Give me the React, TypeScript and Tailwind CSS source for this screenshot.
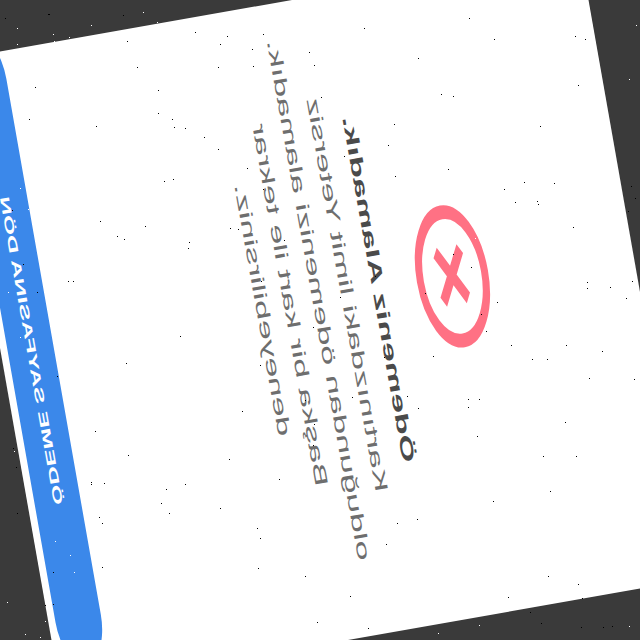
// speckles read off the picture, [x, y] in page pixels
const BLACK_DOTS: [number, number][] = [
  [49, 14], [5, 18], [123, 15],
  [195, 32], [227, 36], [263, 34], [220, 44], [252, 49], [309, 52], [314, 65], [127, 41], [137, 67], [218, 67], [253, 66],
  [35, 87], [158, 90], [29, 119], [158, 113], [172, 119], [174, 127], [185, 128], [96, 126], [204, 137], [218, 149],
  [247, 168], [164, 181], [173, 179], [263, 189], [100, 221], [145, 226], [230, 228], [238, 229], [117, 236], [124, 239],
  [189, 242], [188, 248], [284, 240], [68, 281], [73, 281], [261, 281], [12, 210], [23, 264], [37, 292],
  [364, 28], [469, 18], [494, 39], [575, 36], [585, 39], [418, 58], [578, 85], [441, 94], [453, 96], [321, 97],
  [394, 124], [540, 126], [388, 145], [344, 156], [448, 169], [395, 176], [524, 182], [554, 183], [504, 189], [515, 202],
  [538, 204], [537, 201], [635, 198], [573, 227], [453, 254], [471, 267], [587, 282], [610, 287], [632, 281], [587, 288],
  [626, 298], [497, 302], [375, 276], [340, 297], [425, 293], [481, 314], [631, 186], [628, 211],
  [180, 336], [126, 363], [260, 365], [57, 376], [242, 411], [95, 431], [128, 455], [229, 459], [279, 479],
  [91, 482], [91, 484], [104, 483], [185, 484], [166, 489], [161, 503], [169, 513], [220, 508], [99, 517], [102, 523],
  [257, 528], [260, 538], [102, 567], [258, 568], [305, 576], [317, 622], [305, 400], [314, 424], [313, 445], [313, 327],
  [53, 604], [53, 572],
  [486, 331], [511, 345], [566, 345], [602, 351], [532, 359], [547, 359], [433, 356], [384, 357], [589, 378], [634, 379],
  [407, 396], [352, 397], [468, 399], [479, 399], [468, 407], [418, 408], [565, 422], [477, 436], [543, 456], [576, 456],
  [550, 491], [493, 501], [417, 519], [397, 523], [386, 544], [548, 576], [578, 584], [582, 598], [350, 596], [508, 597],
  [368, 628],
  [48, 14], [13, 448], [16, 467], [17, 513], [45, 605],
  [530, 612], [541, 623], [581, 627], [603, 627], [612, 626],
];

const WHITE_DOTS: [number, number][] = [
  [17, 28], [53, 34], [69, 37], [54, 41], [17, 44], [91, 25], [143, 12], [157, 22],
  [20, 188], [28, 209], [8, 292],
  [475, 238], [636, 25], [629, 79],
  [20, 337], [55, 541], [70, 555], [74, 572], [14, 451], [25, 483], [7, 602], [45, 621], [25, 634], [40, 637],
  [479, 625], [438, 633], [629, 626],
];

export default function App() {
  return (
    <div className="relative flex h-[640px] w-[640px] items-center justify-center overflow-hidden bg-[#3a3a3a]">
      <div className="h-[640px] w-[320px] shrink-0 overflow-hidden bg-white [transform:matrix(-0.3473,-1.9696,-0.9848,0.1736,0,0)]">
        <div className="ml-[20px] flex h-full w-[300px] flex-col items-center font-['Liberation_Sans',sans-serif]">
          <div className="mt-[146px] flex h-[72px] w-[72px] items-center justify-center rounded-full border-[7px] border-[#ff7184]">
            <svg width="33" height="33" viewBox="0 0 33 33">
              <path d="M4 4 L29 29 M29 4 L4 29" stroke="#ff7184" strokeWidth="7" fill="none" />
            </svg>
          </div>
          <h1 className="mt-[28px] text-lg font-bold leading-[22px] text-[#4a4a4a]">Ödemeniz Alamadık.</h1>
          <p className="mt-[7px] w-[270px] text-center text-[18px] leading-[28.8px] text-[#6e6e6e]">
            Kartınızdaki limit Yetersiz olduğundan ödemenizi alamadık. Başka bir kart ile tekrar deneyebilirsiniz.
          </p>
          <button className="mb-[7px] mt-auto flex h-[46px] w-[318px] shrink-0 items-center justify-center rounded-full bg-[#3b88ea] text-[13px] font-bold text-white">
            ÖDEME SAYFASINA DÖN
          </button>
        </div>
      </div>

      <svg className="pointer-events-none absolute inset-0" width="640" height="640" shapeRendering="crispEdges">
        {BLACK_DOTS.map(([x, y]) => (
          <rect key={`b${x}-${y}`} x={x} y={y} width="1" height="1" fill="#000000" />
        ))}
        {WHITE_DOTS.map(([x, y]) => (
          <rect key={`w${x}-${y}`} x={x} y={y} width="1" height="1" fill="#ffffff" />
        ))}
      </svg>
    </div>
  );
}
